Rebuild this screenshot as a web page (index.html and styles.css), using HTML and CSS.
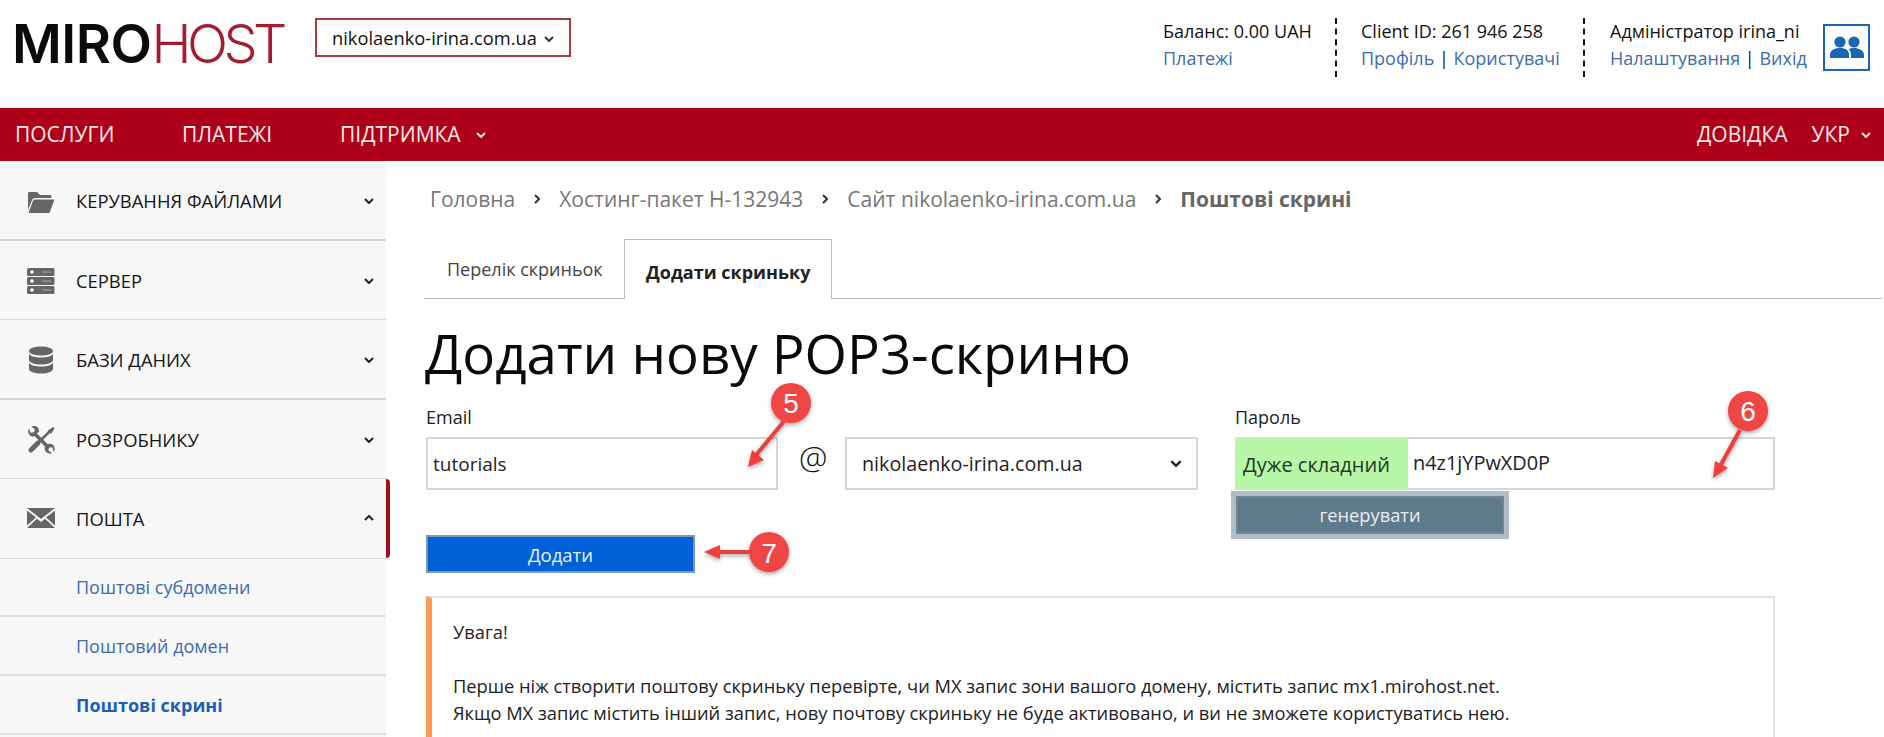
FILE: index.html
```html
<!DOCTYPE html>
<html lang="uk">
<head>
<meta charset="utf-8">
<title>Mirohost</title>
<link rel="stylesheet" href="styles.css">
</head>
<body>
<svg width="0" height="0" class="defs">
  <symbol id="chev" viewBox="0 0 10 6"><path d="M1 1l4 4 4-4" fill="none" stroke="currentColor" stroke-width="2"/></symbol>
</svg>
<header class="top">
  <div class="logo"><span class="logo-a">MIRO</span><span class="logo-b">HOST</span></div>
  <div class="domain">nikolaenko-irina.com.ua <svg class="chev-s"><use href="#chev"/></svg></div>
  <div class="account">
    <div class="acc acc-1"><div>Баланс: 0.00 UAH</div><div><a>Платежі</a></div></div>
    <div class="acc acc-2"><div>Client ID: 261 946 258</div><div><a>Профіль</a> | <a>Користувачі</a></div></div>
    <div class="acc acc-3"><div>Адміністратор irina_ni</div><div><a>Налаштування</a> | <a>Вихід</a></div></div>
    <div class="avatar">
      <svg viewBox="0 0 34 24" width="34" height="24"><circle cx="10" cy="6" r="5.6" fill="#1a66b4"/><circle cx="24" cy="6" r="5.6" fill="#1a66b4"/><path d="M0 22v-3c0-4.500 4-7 10-7s9 2.500 9 7v3z" fill="#1a66b4"/><path d="M21 12.300c6-1 13 1.500 13 6.700v3H21v-3c0-2.500-.8-4.700-2.500-5.800z" fill="#1a66b4"/></svg>
    </div>
  </div>
</header>
<nav class="menu">
  <a class="m-1">ПОСЛУГИ</a>
  <a class="m-2">ПЛАТЕЖІ</a>
  <a class="m-3">ПІДТРИМКА <svg class="chev-w"><use href="#chev"/></svg></a>
  <span class="m-fill"></span>
  <a class="m-4">ДОВІДКА</a>
  <a class="m-5">УКР <svg class="chev-w"><use href="#chev"/></svg></a>
</nav>
<div class="page">
  <aside class="side">
    <div class="row thick">
      <svg class="ic" viewBox="0 0 28 24"><path d="M1 4.500C1 3.500 1.700 3 2.500 3h7.500l3 3h10c.8 0 1.500.6 1.500 1.500V9H8c-1.500 0-2.500.8-3 2L1 21z" fill="#666"/><path d="M8 10.500h19.500L22.500 24H1.500L6 11.700c.3-.8 1-1.200 2-1.200z" fill="#666"/></svg>
      <span class="lbl">КЕРУВАННЯ ФАЙЛАМИ</span><svg class="chev-d"><use href="#chev"/></svg>
    </div>
    <div class="row">
      <svg class="ic" viewBox="0 0 28 28"><g fill="#666"><rect y="1" width="27.500" height="8" rx="1.500"/><rect y="10" width="27.500" height="8" rx="1.500"/><rect y="19" width="27.500" height="8" rx="1.500"/></g><g fill="#fff"><circle cx="5" cy="5" r="1.800"/><circle cx="5" cy="14" r="1.800"/><circle cx="5" cy="23" r="1.800"/></g><g stroke="#aaa" stroke-width="1.200"><path d="M15 5h9M15 14h9M15 23h9"/></g></svg>
      <span class="lbl">СЕРВЕР</span><svg class="chev-d"><use href="#chev"/></svg>
    </div>
    <div class="row thick">
      <svg class="ic" viewBox="0 0 28 28"><g fill="#666"><ellipse cx="14" cy="5" rx="12" ry="4.500"/><path d="M2 8c2 2.500 6.500 3.500 12 3.500S24 10.500 26 8v6c0 2.500-5.400 4.500-12 4.500S2 16.500 2 14z"/><path d="M2 17c2 2.500 6.500 3.500 12 3.500s10-1 12-3.500v6c0 2.500-5.400 4.500-12 4.500S2 25.500 2 23z"/></g></svg>
      <span class="lbl">БАЗИ ДАНИХ</span><svg class="chev-d"><use href="#chev"/></svg>
    </div>
    <div class="row">
      <svg class="ic" viewBox="0 0 28 28"><g fill="none" stroke="#666" stroke-linecap="round"><path d="M22.500 5.500L11 17" stroke-width="2.600"/><path d="M11 17L4 24" stroke-width="5"/><path d="M8 8L20 20" stroke-width="3.600"/></g><g fill="#666"><path d="M21 4.500L26 1l1.500 1.500L24 8z"/><path d="M2 2.500a6 6 0 0 0 .5 6.500c1.700 1.700 4.500 2 6.500.8l1-2.800 2-1c.3-2-.5-3.900-2-5.200C8.500-.1 6.300-.3 4.500.3L8 3.800 6.500 6.500l-2.800 .3z"/><path d="M26.500 26a6 6 0 0 0 .2-6.500c-1.600-1.900-4.300-2.300-6.400-1.300l-1.100 1.300-1.500 1.500c-.3 1.900.3 4 1.800 5.300 1.500 1.300 3.700 1.700 5.500 1.100L21 24l1.600-2.600 2.800-.2z"/></g></svg>
      <span class="lbl">РОЗРОБНИКУ</span><svg class="chev-d"><use href="#chev"/></svg>
    </div>
    <div class="row open">
      <svg class="ic" viewBox="0 0 28 20"><g fill="#666"><path d="M0 0h28L14 11z"/><path d="M0 2.500v15L9 9.500zM28 2.500v15l-9-8zM0 20h28L18 10.700 14 14l-4-3.300z"/></g></svg>
      <span class="lbl">ПОШТА</span><svg class="chev-d up"><use href="#chev"/></svg>
    </div>
    <a class="sub">Поштові субдомени</a>
    <a class="sub">Поштовий домен</a>
    <a class="sub current">Поштові скрині</a>
  </aside>
  <main class="main">
    <div class="crumbs">
      <span>Головна</span><svg class="chev-r"><use href="#chev"/></svg>
      <span>Хостинг-пакет Н-132943</span><svg class="chev-r"><use href="#chev"/></svg>
      <span>Сайт nikolaenko-irina.com.ua</span><svg class="chev-r"><use href="#chev"/></svg>
      <b>Поштові скрині</b>
    </div>
    <div class="tabs">
      <div class="tab">Перелік скриньок</div>
      <div class="tab active">Додати скриньку</div>
    </div>
    <h1>Додати нову POP3-скриню</h1>
    <div class="form">
      <div class="col-left">
        <div class="label">Email</div>
        <div class="field f-email">tutorials</div>
        <div class="btn-add">Додати</div>
      </div>
      <div class="at">@</div>
      <div class="field f-domain">nikolaenko-irina.com.ua <svg class="chev-d"><use href="#chev"/></svg></div>
      <div class="col-pass">
        <div class="label">Пароль</div>
        <div class="field f-pass"><span class="strength">Дуже складний</span><span class="pw">n4z1jYPwXD0P</span></div>
        <div class="btn-gen">генерувати</div>
      </div>
    </div>
    <div class="notice">
      <p>Увага!</p>
      <p>Перше ніж створити поштову скриньку перевірте, чи MX запис зони вашого домену, містить запис mx1.mirohost.net.<br>Якщо MX запис містить інший запис, нову почтову скриньку не буде активовано, и ви не зможете користуватись нею.</p>
    </div>
  </main>
</div>
<svg class="notes" viewBox="0 0 1884 737" width="1884" height="737">
  <defs><filter id="sh" x="-30%" y="-30%" width="160%" height="160%"><feDropShadow dx="0" dy="2" stdDeviation="2" flood-color="#000" flood-opacity=".35"/></filter></defs>
  <g filter="url(#sh)">
    <path d="M785 420L752 460" stroke="#ee3d3d" stroke-width="4"/><path d="M748 467l4-17 12 10z" fill="#ee3d3d"/>
    <circle cx="791" cy="403" r="20" fill="#f04444"/>
    <path d="M1740 430L1718 470" stroke="#ee3d3d" stroke-width="4"/><path d="M1713 478l2-17 13 7z" fill="#ee3d3d"/>
    <circle cx="1748" cy="411" r="20" fill="#f04444"/>
    <path d="M752 552H715" stroke="#ee3d3d" stroke-width="4"/><path d="M704 552l16-7v14z" fill="#ee3d3d"/>
    <circle cx="769" cy="552" r="20" fill="#f04444"/>
  </g>
  <text x="791" y="413" class="note-n">5</text>
  <text x="1748" y="421" class="note-n">6</text>
  <text x="769" y="563" class="note-n">7</text>
</svg>
</body>
</html>
```
FILE: styles.css
```css
* { box-sizing: border-box; }
html, body { margin: 0; height: 737px; overflow: hidden; background: #fff; }
body { position: relative; font-family: "Open Sans", "Noto Sans", sans-serif; color: #111; font-size: 18px; }
a { color: #3b6cb0; }
.defs { position: absolute; }

.top { height: 108px; display: flex; align-items: flex-start; }
.logo { margin: 19px 0 0 12px; width: 274px; font-family: "Inter", sans-serif; font-size: 54px; line-height: 50px; white-space: nowrap; letter-spacing: -.5px; }
.logo-a { font-weight: 600; color: #0b0b0b; }
.logo-b { font-weight: 300; color: #a51c30; letter-spacing: -4.500px; }
.domain { margin: 18px 0 0 29px; width: 256px; height: 39px; border: 2px solid #a83c46; display: flex; align-items: center; padding-left: 15px; font-size: 18.300px; gap: 7px; white-space: nowrap; }
.chev-s { width: 10px; height: 6px; margin-top: 2px; color: #333; }
.account { margin-left: auto; display: flex; align-items: flex-start; padding: 18px 14px 0 0; }
.acc { height: 59px; line-height: 27px; font-size: 18px; white-space: nowrap; }
.acc-1 { width: 172px; }
.acc-2 { width: 248px; border-left: 2px dashed #111; padding-left: 24px; }
.acc-3 { width: 240px; border-left: 2px dashed #111; padding-left: 25px; }
.avatar { width: 47px; height: 47px; margin-top: 6px; border: 2px solid #1a66b4; display: flex; align-items: center; justify-content: center; }

.menu { height: 53px; background: #ae0018; color: #fff; display: flex; align-items: center; padding-bottom: 2px; font-size: 21px; white-space: nowrap; }
.menu a { color: #f6eaea; }
.m-1 { margin-left: 15px; width: 167px; }
.m-2 { width: 158px; }
.m-3 { display: flex; align-items: center; gap: 15px; }
.m-fill { flex: 1; }
.m-4 { margin-right: 24px; }
.m-5 { display: flex; align-items: center; gap: 11px; margin-right: 13px; }
.chev-w { width: 10px; height: 6px; margin-top: 3px; }

.page { display: flex; height: 576px; }
.side { width: 386px; flex: none; background: #f7f7f8; }
.row { height: 79.500px; display: flex; align-items: center; padding: 2px 12px 0 27px; border-bottom: 1.500px solid #d8d8d8; font-size: 18.400px; position: relative; }
.row.thick { border-bottom: 2.500px solid #d4d4d4; }
.ic { width: 28px; height: 28px; flex: none; }
.lbl { margin-left: 21px; flex: 1; color: #151515; }
.chev-d { width: 10px; height: 6px; color: #222; flex: none; }
.chev-d.up { transform: rotate(180deg); }
.open { padding-top: 0; }
.open::after { content: ""; position: absolute; right: -4px; top: 0; bottom: 0; width: 4px; background: #a20c1c; border-radius: 0 4px 4px 0; }
.sub { display: flex; align-items: center; height: 58.700px; padding: 1px 0 0 76px; border-bottom: 2px solid #dedede; font-size: 18px; color: #3b6cb0; }
.current { font-weight: 700; color: #1d5fb4; }

.main { flex: 1; padding: 0 2px 0 38px; min-width: 0; }
.crumbs { height: 76px; display: flex; align-items: center; padding: 0 0 0 6px; font-size: 21px; color: #777; white-space: nowrap; }
.crumbs b { color: #666; font-weight: 700; }
.chev-r { width: 10px; height: 6px; margin: 0 17px; transform: rotate(-90deg); color: #333; }
.tabs { height: 62px; padding-top: 2px; display: flex; border-bottom: 1.500px solid #bbb; }
.tab { width: 200px; padding: 18px 0 0 23px; font-size: 18px; color: #444; }
.tab.active { width: 208px; height: 60px; padding: 20px 0 0 21px; font-weight: 700; color: #222; background: #fff; border: 1.500px solid #bbb; border-bottom: 0; position: relative; }
h1 { margin: 0; height: 107px; padding: 14px 0 0 1px; font-size: 54.600px; font-weight: 400; line-height: 80px; color: #0a0a0a; white-space: nowrap; }
.form { display: grid; grid-template-columns: 352px 67px 353px 1fr; height: 190px; padding-left: 2px; }
.label { height: 32px; line-height: 22px; font-size: 18px; color: #222; }
.field { height: 53px; border: 2px solid #d6d6d6; background: #fff; }
.col-left { grid-column: 1; }
.f-email { margin-top: -1px; padding-left: 5px; font-size: 19px; line-height: 50px; color: #222; }
.btn-add { margin-top: 45px; width: 269px; height: 38px; background: #0060d8; border: 2px solid #7f97ab; color: #e8f3ff; text-align: center; font-size: 18.500px; line-height: 36px; }
.at { padding: 31px 0 0 21px; font-size: 32px; font-weight: 300; line-height: 40px; }
.f-domain { margin-top: 31px; padding: 0 14px 0 15px; display: flex; align-items: center; justify-content: space-between; font-size: 19.700px; color: #222; }
.f-domain .chev-d { width: 12px; height: 7px; }
.col-pass { margin-left: 37px; width: 540px; }
.f-pass { margin-top: -1px; display: flex; border-left: 0; }
.strength { margin: -2px 0; width: 173px; background: #b9f7a8; padding: 0 0 0 8px; line-height: 56px; font-size: 20px; color: #1e3a1e; }
.pw { padding-left: 5px; font-size: 19.900px; line-height: 48px; color: #222; }
.btn-gen { margin: 1px 0 0 -4px; width: 278px; height: 48px; background: #5f7a8b; border: 5px solid #b1bdc6; outline: 2px solid #708594; outline-offset: -7px; color: #e9eef2; text-align: center; font-size: 18.300px; line-height: 37px; }
.notice { margin: 0 0 0 2px; width: 1349px; height: 200px; border: 2px solid #e2e2e2; border-left: 6px solid #ff9b50; padding: 20px 21px; font-size: 18.300px; line-height: 27px; color: #222; }
.notice p { margin: 0 0 27px; }

.notes { position: absolute; left: 0; top: 0; pointer-events: none; }
.note-n { font-family: "Liberation Sans", sans-serif; font-size: 28px; fill: #fff; text-anchor: middle; }
```
